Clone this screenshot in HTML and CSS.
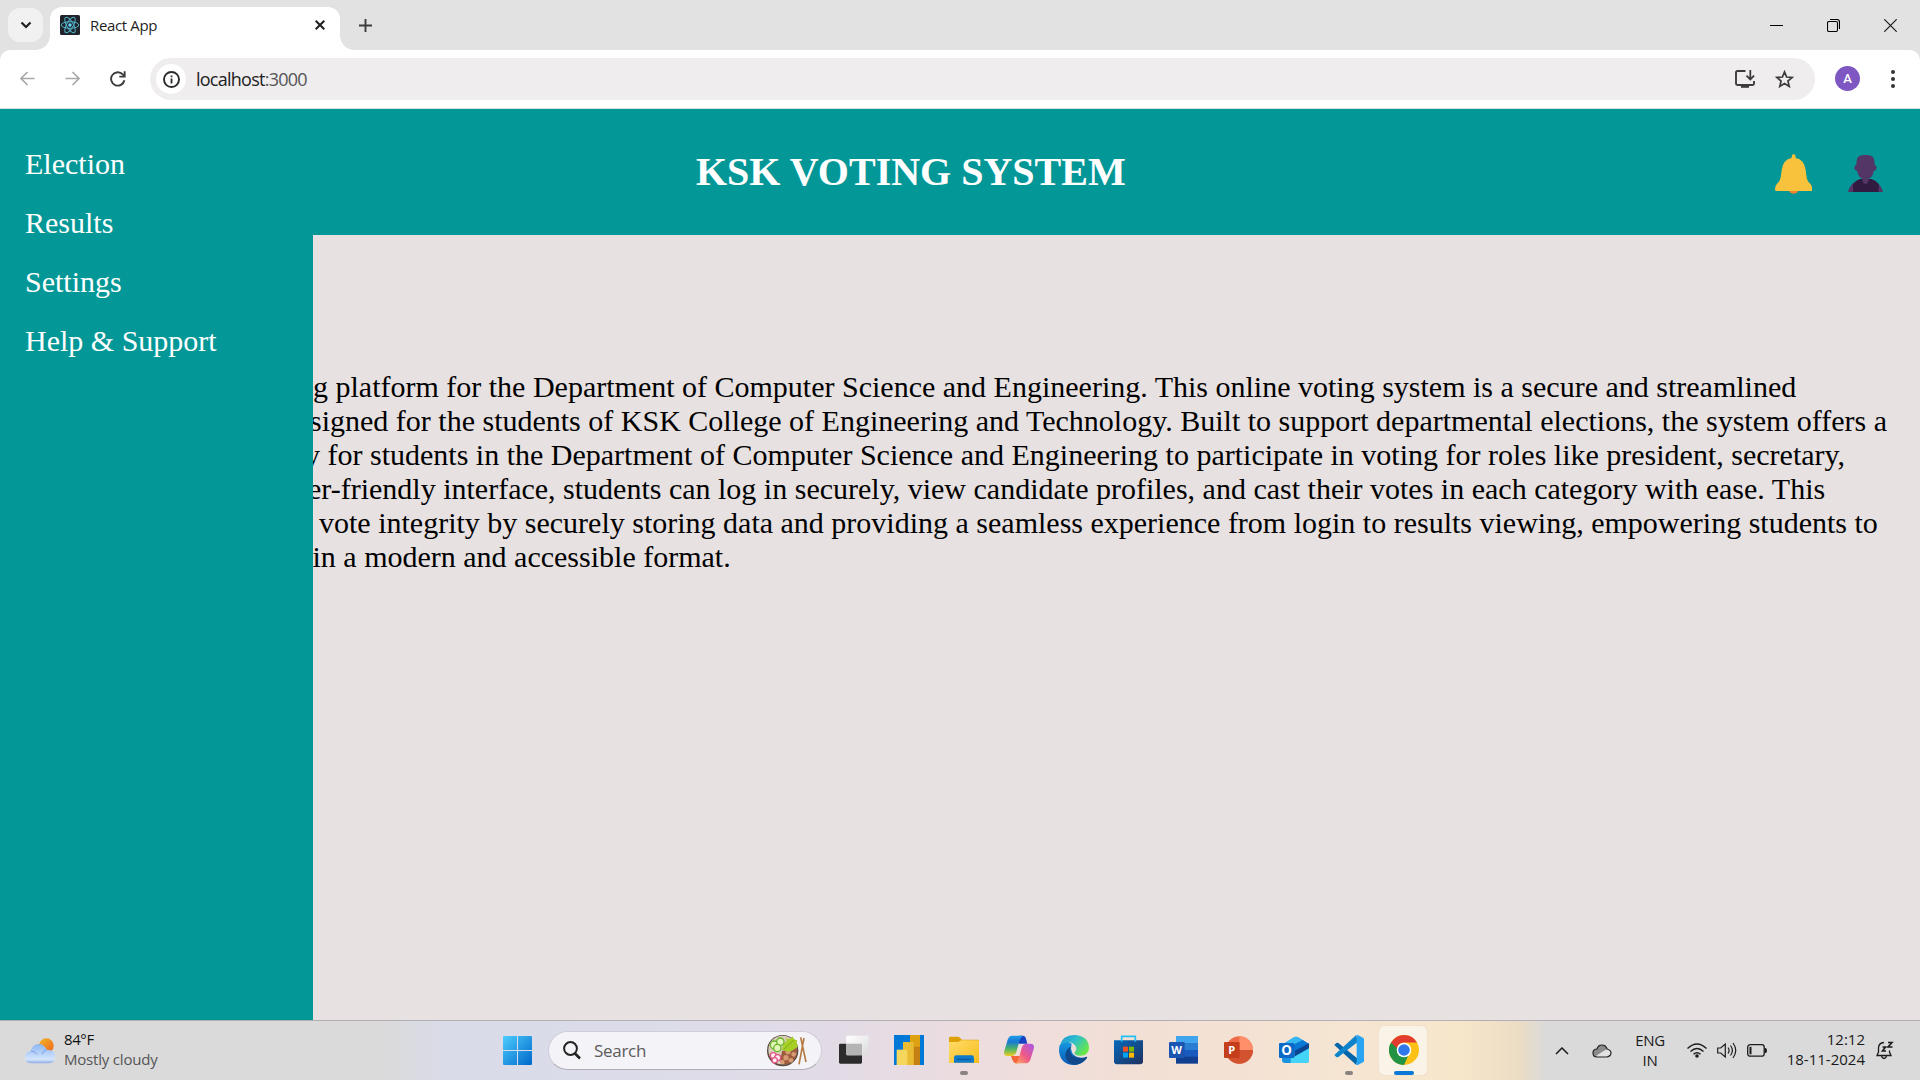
FILE: index.html
```html
<!DOCTYPE html>
<html lang="en">
<head>
<meta charset="utf-8">
<title>React App</title>
<link rel="stylesheet" href="styles.css">
</head>
<body>
<div class="tabstrip">
  <div class="tab-search"><svg width="12" height="8" viewBox="0 0 12 8"><path d="M1.5 1.5 6 6l4.500-4.500" fill="none" stroke="#1f1f1f" stroke-width="2.200"/></svg></div>
  <div class="tab">
    <svg class="favicon" width="20" height="20" viewBox="0 0 20 20"><rect width="20" height="20" rx="1.500" fill="#20232a"/><g fill="none" stroke="#53b3cb" stroke-width="1"><ellipse cx="10" cy="10" rx="8.800" ry="3.300"/><ellipse cx="10" cy="10" rx="8.800" ry="3.300" transform="rotate(60 10 10)"/><ellipse cx="10" cy="10" rx="8.800" ry="3.300" transform="rotate(120 10 10)"/></g><circle cx="10" cy="10" r="1.700" fill="#61dafb"/></svg>
    <span class="tab-title">React App</span>
    <svg width="10" height="10" viewBox="0 0 10 10"><path d="M.7.700 9.300 9.300M9.300.700.700 9.300" stroke="#1f1f1f" stroke-width="2"/></svg>
  </div>
  <svg class="new-tab" width="13" height="13" viewBox="0 0 13 13"><path d="M6.500 0v13M0 6.500h13" stroke="#3c3c3c" stroke-width="1.900"/></svg>
  <div class="window-buttons">
    <svg width="13" height="13" viewBox="0 0 13 13"><path d="M0 6.500h13" stroke="#000"/></svg>
    <svg width="13" height="13" viewBox="0 0 13 13"><g fill="none" stroke="#000" stroke-width="1.100"><rect x=".5" y="2.500" width="10" height="10" rx="1.500"/><path d="M3 .500h7a2.500 2.500 0 0 1 2.500 2.500v7"/></g></svg>
    <svg width="13" height="13" viewBox="0 0 13 13"><path d="M.3.300l12.400 12.400M12.700.300.300 12.700" stroke="#1a1a1a" stroke-width="1.200"/></svg>
  </div>
</div>
<div class="toolbar">
  <div class="nav">
    <svg width="15" height="15" viewBox="0 0 15 15"><path d="M14.500 7.500H1.500M7.500 1 1 7.500 7.500 14" fill="none" stroke="#a9a9a9" stroke-width="1.700"/></svg>
    <svg width="15" height="15" viewBox="0 0 15 15"><path d="M.5 7.500h13M7.500 1 14 7.500 7.500 14" fill="none" stroke="#a9a9a9" stroke-width="1.700"/></svg>
    <svg width="16" height="16" viewBox="0 0 16 16"><path d="M14.400 9.200A6.700 6.700 0 1 1 12.800 3.400L14.500 5.200" fill="none" stroke="#3c3c3c" stroke-width="1.900"/><path d="M15.600.300v6.300H9.300V4.800h4.400V.300z" fill="#3c3c3c"/></svg>
  </div>
  <div class="omnibox">
    <div class="site-info"><svg width="17" height="17" viewBox="0 0 17 17"><circle cx="8.500" cy="8.500" r="7.500" fill="none" stroke="#2b2b2b" stroke-width="1.900"/><path d="M7.600 4.400h1.800v1.800H7.600zM7.600 7.500h1.800v5H7.600z" fill="#2b2b2b"/></svg></div>
    <span class="url">localhost<span class="port">:3000</span></span>
    <svg class="install" width="20" height="18" viewBox="0 0 20 18"><path d="M10.500 1H2.500Q1 1 1 2.500v11Q1 15 2.500 15h15q1.500 0 1.500-1.500V11" fill="none" stroke="#3c3c3c" stroke-width="1.900"/><path d="M6 15h8v2.800H6z" fill="#3c3c3c"/><path d="M15.300 0v9M11.500 5.700l3.800 3.800 3.800-3.800" fill="none" stroke="#3c3c3c" stroke-width="1.800"/></svg>
    <svg width="19" height="18" viewBox="0 0 19 18"><path d="M9.500 1.900l2.100 5.100 5.500.400-4.200 3.600 1.300 5.400-4.700-2.900-4.700 2.900 1.300-5.400L1.900 7.400 7.400 7z" fill="none" stroke="#3c3c3c" stroke-width="1.700"/></svg>
  </div>
  <div class="avatar">A</div>
  <svg class="menu" width="4" height="18" viewBox="0 0 4 18" fill="#333"><circle cx="2" cy="2" r="2"/><circle cx="2" cy="9" r="2"/><circle cx="2" cy="16" r="2"/></svg>
</div>

<div class="page">
  <nav class="sidebar">
    <a>Election</a><a>Results</a><a>Settings</a><a>Help &amp; Support</a>
  </nav>
  <div class="content">
    <header class="banner">
      <h1>KSK VOTING SYSTEM</h1>
      <svg class="bell" width="37" height="40" viewBox="346 462 111 120"><circle cx="402" cy="566" r="15" fill="#f8832c"/><path d="M396 474q-1-11 6-12 7 1 6 12 26 5 30 36c3 25 4 32 11 38q9 8 9 21 0 4-4 4H350q-4 0-4-4 0-13 9-21c7-6 8-13 11-38q4-31 30-36z" fill="#f9c23c"/></svg>
      <svg class="person" width="35" height="37" viewBox="566 466 104 110"><path d="M566 576q6-28 36-39h32q30 11 36 39z" fill="#533566"/><path d="M581 576v-23q8-12 22-16h30q16 4 24 16v23z" fill="#321b41"/><path d="M609 525h18v18q-2 9-9 9t-9-9z" fill="#533566"/><path d="M591 496v-8q0-22 22-22h10q22 0 22 22v8q6 1 6 8 0 8-8 9-3 25-25 25t-25-25q-8-1-8-9 0-7 6-8z" fill="#533566"/></svg>
    </header>
    <main class="intro">
      <span class="line l1">g platform for the Department of Computer Science and Engineering. This online voting system is a secure and streamlined</span>
      <span class="line l2">signed for the students of KSK College of Engineering and Technology. Built to support departmental elections, the system offers a</span>
      <span class="line l3">y for students in the Department of Computer Science and Engineering to participate in voting for roles like president, secretary,</span>
      <span class="line l4">er-friendly interface, students can log in securely, view candidate profiles, and cast their votes in each category with ease. This</span>
      <span class="line l5">vote integrity by securely storing data and providing a seamless experience from login to results viewing, empowering students to</span>
      <span class="line l6">in a modern and accessible format.</span>
    </main>
  </div>
</div>

<footer class="taskbar">
  <div class="weather">
    <svg width="30" height="26" viewBox="75 84 90 76"><defs><linearGradient id="sun" x1="0" y1="0" x2="1" y2="1"><stop offset="0" stop-color="#f0b429"/><stop offset="1" stop-color="#f1651d"/></linearGradient><linearGradient id="cloud" x1="0" y1="0" x2="0" y2="1"><stop offset="0" stop-color="#8db5f3"/><stop offset=".8" stop-color="#d3e5fc"/><stop offset="1" stop-color="#8fa9e6"/></linearGradient></defs><circle cx="139" cy="106" r="22" fill="url(#sun)"/><path d="M94 159q-19 0-19-17t17-20q5-20 24-21 16 0 24 17 25-1 25 21 0 20-20 20z" fill="url(#cloud)"/><path d="M92 122q12 0 20 10M126 132q4-12 14-14" fill="none" stroke="#7aa2ea" stroke-width="3"/></svg>
    <div class="forecast"><div class="temp">84°F</div><div class="sky">Mostly cloudy</div></div>
  </div>
  <div class="apps">
    <svg class="start" width="29" height="29" viewBox="0 0 29 29"><defs><linearGradient id="win" x1="0" y1="0" x2="1" y2="1"><stop offset="0" stop-color="#4ccdff"/><stop offset="1" stop-color="#0067c9"/></linearGradient></defs><path d="M1 0h13v14H0V1q0-1 1-1zM15 0h13q1 0 1 1v13H15zM0 15h14v14H1q-1 0-1-1zM15 15h14v13q0 1-1 1H15z" fill="url(#win)"/></svg>
    <div class="search">
      <svg width="18" height="19" viewBox="0 0 18 19"><circle cx="7.500" cy="7.500" r="6.400" fill="none" stroke="#222" stroke-width="2"/><path d="M12 12.500l5 5" stroke="#222" stroke-width="2.600"/></svg>
      <span>Search</span>
      <svg class="bowl" width="41" height="32" viewBox="861 74 123 96"><circle cx="908" cy="121" r="47" fill="#59493e"/><circle cx="908" cy="119" r="43" fill="#d9cdbc"/><path d="M906 122l44-10q6 35-30 51l-20-7z" fill="#9c5b3c"/><g fill="#d99b76"><circle cx="924" cy="124" r="8"/><circle cx="941" cy="132" r="7"/><circle cx="918" cy="142" r="8"/><circle cx="933" cy="150" r="7"/><circle cx="907" cy="155" r="7"/></g><path d="M906 119q2-20 14-26l-2-9 12 3 8-9 5 10 8 1-1 13 5 5-16 13-12 4z" fill="#a8cf24"/><path d="M911 117l32-29" stroke="#7dae15" stroke-width="3"/><g fill="#e4f5b8" stroke="#69b52b" stroke-width="4"><circle cx="883" cy="104" r="12"/><circle cx="901" cy="94" r="11"/><circle cx="892" cy="113" r="11"/></g><g fill="#fff0f3" stroke="#e25384" stroke-width="4"><circle cx="880" cy="136" r="9"/><circle cx="893" cy="142" r="9"/><circle cx="884" cy="150" r="8"/></g><path d="M962 81l16 74M972 83l-15 79" stroke="#b77c45" stroke-width="5"/></svg>
    </div>
    <div class="cell"><svg width="30" height="30" viewBox="57 76 90 90"><defs><linearGradient id="tv" x1="0" y1="0" x2="1" y2="1"><stop offset="0" stop-color="#fff"/><stop offset="1" stop-color="#dcdcdc"/></linearGradient></defs><rect x="57" y="102" width="69" height="60" rx="4" fill="#2c2c2c"/><rect x="79" y="78" width="67" height="59" rx="3" fill="url(#tv)"/><path d="M79 102h44q3 0 3 3v32H82q-3 0-3-3z" fill="#b4b4b4"/></svg></div>
    <div class="cell"><svg width="30" height="30" viewBox="222 75 90 90"><path fill="#0078d7" d="M222 75h90v90h-90z"/><path fill="#dda112" d="M270 75h30v90h-30z"/><path fill="#c57f12" d="M281 110h19v55h-19z"/><path fill="#e8bb32" d="M249 96h32v69h-32z"/><path fill="#f5d75d" d="M230 119h32v46h-32z"/></svg></div>
    <div class="cell"><svg width="30" height="30" viewBox="387 76 90 90"><defs><linearGradient id="fold" x1="0" y1="0" x2="1" y2="1"><stop offset="0" stop-color="#ffdc68"/><stop offset="1" stop-color="#f9bc1e"/></linearGradient></defs><path d="M387 85q0-4 4-4h25l10 9h47q4 0 4 4v20h-90z" fill="#dda009"/><path d="M387 97h28l9-5h49q4 0 4 4v64h-90z" fill="url(#fold)"/><path d="M402 159v-15q0-7 7-7h46q7 0 7 7v15z" fill="#0f79ca"/><path d="M411 149h42" stroke="#07569b" stroke-width="3"/></svg><i class="dot"></i></div>
    <div class="cell"><svg width="30" height="30" viewBox="552 75 90 90"><defs><linearGradient id="cpa" x1="0" y1="0" x2="0" y2="1"><stop offset="0" stop-color="#1e9ee8"/><stop offset=".3" stop-color="#1778d2"/><stop offset=".65" stop-color="#4bb668"/><stop offset="1" stop-color="#f1cc21"/></linearGradient><linearGradient id="cpb" x1="1" y1="0" x2="0" y2="1"><stop offset="0" stop-color="#a957eb"/><stop offset=".55" stop-color="#ee5a87"/><stop offset="1" stop-color="#ffaf59"/></linearGradient></defs><path d="M597 77h11q8 0 10 9l4 15h-27z" fill="#1842c4"/><path d="M573 138h28l-6 20q-3 5-10 1-7-3-12-21z" fill="#f46639"/><path d="M576 77h34q-8 3-11 14l-10 35q-4 12-15 12h-11q-14 0-10-15l10-34q4-12 13-12z" fill="url(#cpa)"/><path d="M619 101h12q14 0 10 16l-9 29q-4 14-16 14h-31q8-3 11-14l9-32q4-13 14-13z" fill="url(#cpb)"/></svg></div>
    <div class="cell"><svg width="30" height="30" viewBox="717 75 90 90"><defs><linearGradient id="ed" x1="0" y1="0" x2="1" y2=".6"><stop offset="0" stop-color="#1b91d6"/><stop offset=".5" stop-color="#30bfce"/><stop offset="1" stop-color="#67e747"/></linearGradient><linearGradient id="ee" x1="0" y1="0" x2="0" y2="1"><stop offset="0" stop-color="#1599df"/><stop offset="1" stop-color="#0b59b7"/></linearGradient></defs><path d="M719 106q18-18 36-5l-2 15q4 26 30 27 12 1 17-3 3 0 0 5-14 20-38 20-41-1-45-42 0-10 2-17z" fill="url(#ee)"/><path d="M719 108q9-33 43-33 43 1 45 38-1 23-26 24-17 0-18-9 8-7 5-17-10-18-32-14-12 2-17 11z" fill="url(#ed)"/><path d="M753 110q-4 10-2 16 5 18 32 18 10 0 17-4 3 0 0 5-14 18-36 20-24-5-28-27-1-20 17-28z" fill="#114a8b"/></svg></div>
    <div class="cell"><svg width="30" height="30" viewBox="882 76 90 90"><defs><linearGradient id="store" x1="0" y1="0" x2="1" y2="1"><stop offset="0" stop-color="#0669bc"/><stop offset="1" stop-color="#1f315e"/></linearGradient></defs><path d="M882 92h87v63q0 9-9 9h-69q-9 0-9-9z" fill="url(#store)"/><path d="M905 96V80h41v16" fill="none" stroke="#20c0f5" stroke-width="5"/><path fill="#f25022" d="M909 111h15v15h-15z"/><path fill="#7fba00" d="M927 111h15v15h-15z"/><path fill="#00a4ef" d="M909 129h15v15h-15z"/><path fill="#ffb900" d="M927 129h15v15h-15z"/></svg></div>
    <div class="cell"><svg width="30" height="30" viewBox="147 75 90 90"><path fill="#41a5ee" d="M168 78h66v22h-66z"/><path fill="#2b7cd3" d="M168 99h66v22h-66z"/><path fill="#185abd" d="M168 120h66v21h-66z"/><path fill="#103f91" d="M168 140h66v21h-66z"/><rect x="147" y="96" width="47" height="48" rx="3" fill="#1b55b1"/><text class="badge-letter" x="170" y="132">W</text></svg></div>
    <div class="cell"><svg width="30" height="30" viewBox="312 75 90 90"><circle cx="358" cy="120" r="41" fill="#ed6c47"/><path d="M358 79a41 41 0 0 1 41 41h-41z" fill="#ff8f6b"/><path d="M317 120h82a41 41 0 0 1-82 0z" fill="#d35230"/><rect x="312" y="96" width="47" height="48" rx="3" fill="#c43e1c"/><text class="badge-letter" x="335" y="132">P</text></svg></div>
    <div class="cell"><svg width="30" height="30" viewBox="477 75 90 90"><path d="M486 104l36-22q6-3 12 0l33 20v48q0 9-9 9h-63q-9 0-9-9z" fill="#1992df"/><path d="M522 82q6-3 12 0l15 9-43 28-16-17z" fill="#35b8f1"/><path d="M520 104l28-14 19 12-43 25z" fill="#0878d4"/><path d="M524 122l43-22v16l-43 24z" fill="#0a4591"/><path d="M512 146l55-31v35q0 9-9 9h-46z" fill="#44d4f7"/><rect x="477" y="99" width="46" height="45" rx="3" fill="#0b69c7"/><text class="badge-letter big" x="500" y="136">O</text></svg></div>
    <div class="cell"><svg width="30" height="30" viewBox="642 75 90 90"><path d="M643 105l6-6q3-2 6 0l59 48-6 17z" fill="#0065a9"/><path d="M643 135l6 6q3 2 6 0l59-46-6-19z" fill="#0c83cb"/><path d="M708 76q4-2 7 0l14 7q3 2 3 5v64q0 3-3 5l-14 7q-5 2-8-1 3-1 3-6V83q0-4-2-7z" fill="#29a4f3"/></svg><i class="dot"></i></div>
    <div class="cell active"><svg width="30" height="30" viewBox="0 0 90 90"><circle cx="45" cy="45" r="45" fill="#fbc116"/><path d="M45 45h20L45 90A45 45 0 0 1 6 22.500z" fill="#229342"/><path d="M6 22.500Q20 1 45 0q27 1 39 22.500H45q-18 2-20 18z" fill="#e33b2e"/><circle cx="45" cy="45" r="22" fill="#fff"/><circle cx="45" cy="45" r="17.500" fill="#3178ea"/></svg><i class="dot on"></i></div>
  </div>
  <div class="tray">
    <svg width="14" height="8" viewBox="0 0 14 8"><path d="M1 7l6-6 6 6" fill="none" stroke="#1c1c1c" stroke-width="1.500"/></svg>
    <svg class="onedrive" width="20" height="14" viewBox="0 0 20 14"><path d="M1 8q1-3 4-3 1-4 5-4t5 4q4 1 4 4-1 4-4 4H5Q0 12 1 8z" fill="#e2e2e2"/><path d="M1 9q0-4 4-4 1-4 5-4t5 4l-5 3-6 4Q1 12 1 9z" fill="#8b8b8b"/><path d="M5 13Q1 13 1 9t4-4q1-4 5-4t5 4q4 1 4 4t-4 4z" fill="none" stroke="#222" stroke-width="1.200"/></svg>
    <div class="lang">ENG<br>IN</div>
    <svg class="wifi" width="20" height="15" viewBox="0 0 20 15"><g fill="none" stroke="#1c1c1c" stroke-width="1.400"><path d="M.5 5.500Q10-3.500 19.500 5.500M3.500 8.500q6.500-6 13 0M6.500 11.300q3.500-3.200 7 0"/></g><circle cx="10" cy="13" r="1.800" fill="#1c1c1c"/></svg>
    <svg width="20" height="17" viewBox="0 0 20 17"><g fill="none" stroke="#1c1c1c" stroke-width="1.200"><path d="M.7 6h3L8.300 2v13l-4.600-4h-3zM11 5.500q2.200 3 0 6M13.500 3.500q3.800 5 0 10M16 1q5.500 7.500 0 15"/></g></svg>
    <svg class="battery" width="20" height="13" viewBox="0 0 20 13"><rect x=".7" y=".7" width="16.500" height="11.500" rx="2.500" fill="none" stroke="#1c1c1c" stroke-width="1.300"/><rect x="2.500" y="2.800" width="2" height="7.500" fill="#1c1c1c"/><path d="M17.500 4h1q1.500 0 1.500 2.500T18.500 9h-1z" fill="#1c1c1c"/></svg>
    <div class="clock">12:12<br>18-11-2024</div>
    <svg class="dnd" width="18" height="19" viewBox="0 0 18 19"><g fill="none" stroke="#1c1c1c" stroke-width="1.300"><path d="M8 1.500Q2.500 2 2.500 7v4L1 14.500h14L13.500 11V9.500M5.500 14.500q.5 3 2.500 3t2.500-3"/><path d="M6.500 6h3l-3 4h3.500M12 1.500h4l-4 4.500h4.500" stroke-width="1.600"/></g></svg>
  </div>
</footer>
</body>
</html>
```
FILE: styles.css
```css
* { box-sizing: border-box; }
body {
  margin: 0;
  width: 1920px;
  height: 1080px;
  overflow: hidden;
  display: flex;
  flex-direction: column;
  font-family: "Open Sans", "Noto Sans", sans-serif;
  background: #e2e2e2;
}
svg { display: block; flex: none; }

/* Browser tabs */
.tabstrip { height: 50px; display: flex; align-items: center; padding-left: 8px; }
.tab-search {
  width: 35px; height: 34px; border-radius: 12px; background: #f1f1f1;
  display: flex; align-items: center; justify-content: center;
}
.tab {
  position: relative;
  width: 290px; height: 43px; margin: 7px 0 0 7px; padding: 0 15px 7px 10px;
  border-radius: 12px 12px 0 0; background: #fff;
  display: flex; align-items: center;
}
.tab::before, .tab::after {
  content: ""; position: absolute; bottom: 0; width: 14px; height: 14px;
}
.tab::before { left: -14px; background: radial-gradient(circle at 0 0, transparent 13.5px, #fff 14px); }
.tab::after { right: -14px; background: radial-gradient(circle at 100% 0, transparent 13.5px, #fff 14px); }
.tab-title { flex: 1; margin-left: 10px; font-size: 15px; letter-spacing: -0.35px; color: #1f1f1f; }
.new-tab { margin-left: 19px; }
.window-buttons { margin-left: auto; padding-right: 23px; display: flex; gap: 44px; }

/* Address bar */
.toolbar {
  height: 59px; padding: 0 23px 1px 20px; background: #fff; border-bottom: 1px solid #dcdfdf;
  border-radius: 10px 10px 0 0; display: flex; align-items: center;
}
.nav { display: flex; align-items: center; gap: 30px; width: 130px; }
.omnibox {
  width: 1665px; height: 42px; margin-top: 1px; padding: 0 21px 0 6px; border-radius: 21px;
  background: #efedee; display: flex; align-items: center;
}
.site-info {
  width: 30px; height: 30px; border-radius: 50%; background: #fff;
  display: flex; align-items: center; justify-content: center;
}
.url { flex: 1; margin-left: 10px; font-size: 18px; letter-spacing: -0.75px; color: #222; }
.port { color: #555; }
.install { margin-right: 20px; }
.avatar {
  width: 25px; height: 25px; margin-left: 20px; border-radius: 50%; background: #7e57c2; color: #fff;
  font: 500 13px/25px Roboto, sans-serif; text-align: center;
}
.menu { margin-left: auto; margin-right: 2px; }

/* Voting site */
.page { height: 911px; display: flex; background: #e7e1e1; font-family: "Liberation Serif", serif; }
.sidebar {
  position: relative; z-index: 1;
  width: 313px; padding: 25px; background: #039797; color: #fff;
  display: flex; flex-direction: column; font-size: 30px;
}
.sidebar a { height: 59px; line-height: 59px; }
.content { flex: 1; min-width: 0; }
.banner { height: 126px; background: #039797; color: #fff; display: flex; align-items: center; }
.banner h1 { width: 1079px; margin: 0; padding-left: 383px; font-size: 40px; line-height: 46px; white-space: nowrap; }
.banner .bell { margin: 3px 36px 0 383px; }
.banner .person { margin-top: 3px; }
.intro { padding-top: 135px; font-size: 30px; line-height: 34px; color: #000; }
.line { display: block; white-space: nowrap; }
.l2 { text-indent: -3px; }
.l3 { text-indent: -8px; }
.l4 { text-indent: -5px; }
.l5 { text-indent: 6px; }
.l6 { text-indent: -0.5px; }

/* Taskbar */
.taskbar {
  height: 60px; border-top: 1px solid #b3afb4; display: flex;
  background: linear-gradient(90deg, #dadada 0 380px, #d9dbe9 450px, #dcdce9 650px, #e2dbe6 830px, #eedddd 1000px, #f2e0d5 1150px, #f5e5d2 1350px, #f6e7cb 1460px, #ebdcc4 1520px, #dadada 1545px);
}
.weather { width: 503px; padding-left: 25px; display: flex; align-items: center; font-size: 15px; line-height: 20px; }
.weather > svg { margin-right: 9px; }
.forecast { padding-bottom: 4px; }
.temp { color: #111; letter-spacing: -0.4px; }
.sky { color: #555; letter-spacing: -0.2px; }
.apps { display: flex; align-items: center; }
.search {
  width: 274px; height: 39px; margin: 0 4px 0 16px; padding: 0 13px 0 14px; border-radius: 20px;
  background: #f4f3f7; border: 1px solid #d0cddb; border-bottom-color: #b0adb8;
  display: flex; align-items: center; font-size: 17px; letter-spacing: -0.3px; color: #5b5b5b;
}
.search span { flex: 1; margin-left: 13px; }
.cell { position: relative; width: 55px; height: 60px; padding-bottom: 2px; display: flex; align-items: center; justify-content: center; }
.dot {
  position: absolute; bottom: 6px; left: 50%; width: 8px; height: 4px; margin-left: -4px;
  border-radius: 2px; background: #8a8280;
}
.dot.on { width: 20px; margin-left: -10px; background: #0a78d4; }
.active::before {
  content: ""; position: absolute; left: 3px; top: 5px; width: 48px; height: 49px;
  border-radius: 5px; background: #faf3e8; box-shadow: 0 0 1px #cfc2ac;
}
.active svg { position: relative; }
.badge-letter { fill: #fff; font: bold 33px "Open Sans", sans-serif; text-anchor: middle; }
.badge-letter.big { font-size: 40px; }
.tray {
  margin-left: auto; padding-right: 26px; display: flex; align-items: center;
  font-size: 15px; line-height: 20px; color: #1a1a1a;
}
.onedrive { margin-left: 23px; }
.lang { width: 50px; margin-left: 13px; padding-bottom: 2px; text-align: center; letter-spacing: -0.3px; }
.wifi { margin: 0 10px 0 12px; }
.battery { margin-left: 10px; }
.clock { width: 98px; padding-bottom: 4px; text-align: right; letter-spacing: 0; }
.dnd { margin-left: 11px; }
```
